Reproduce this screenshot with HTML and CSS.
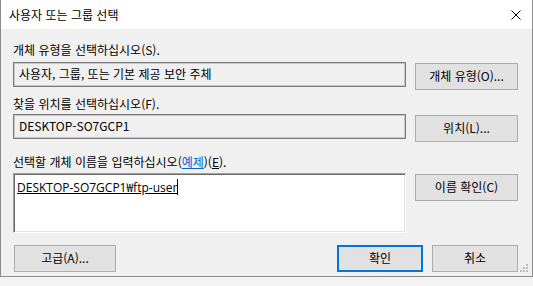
FILE: index.html
```html
<!DOCTYPE html>
<html lang="ko">
<head>
  <meta charset="UTF-8">
  <title>사용자 또는 그룹 선택</title>
  <link rel="stylesheet" href="styles.css">
</head>
<body>
  <div class="window">
    <div class="titlebar">
      <span class="title">사용자 또는 그룹 선택</span>
      <svg class="close" width="10" height="10" viewBox="0 0 10 10">
        <path d="M0.5 0.5 L9.5 9.5 M9.5 0.5 L0.5 9.5" stroke="#000" stroke-width="1" fill="none"/>
      </svg>
    </div>

    <div class="content">
      <div class="label first">개체 유형을 선택하십시오(S).</div>
      <div class="row">
        <div class="field">사용자, 그룹, 또는 기본 제공 보안 주체</div>
        <button class="btn">개체 유형(O)...</button>
      </div>

      <div class="label second">찾을 위치를 선택하십시오(F).</div>
      <div class="row">
        <div class="field">DESKTOP-SO7GCP1</div>
        <button class="btn">위치(L)...</button>
      </div>

      <div class="label third">선택할 개체 이름을 입력하십시오(<span class="link">예제</span>)(<u>E</u>).</div>
      <div class="row">
        <div class="names"><span class="resolved">DESKTOP-SO7GCP1₩ftp-user</span><span class="caret"></span></div>
        <button class="btn">이름 확인(C)</button>
      </div>

      <div class="actions">
        <button class="btn wide">고급(A)...</button>
        <div class="spacer"></div>
        <button class="btn small default">확인</button>
        <button class="btn small">취소</button>
      </div>
    </div>

    <svg class="grip" width="9" height="9" viewBox="0 0 9 9">
      <rect x="6" y="0" width="2" height="2" fill="#bcbcbc"/>
      <rect x="3" y="3" width="2" height="2" fill="#bcbcbc"/>
      <rect x="6" y="3" width="2" height="2" fill="#bcbcbc"/>
      <rect x="0" y="6" width="2" height="2" fill="#bcbcbc"/>
      <rect x="3" y="6" width="2" height="2" fill="#bcbcbc"/>
      <rect x="6" y="6" width="2" height="2" fill="#bcbcbc"/>
    </svg>
  </div>
  <div class="behind"></div>
</body>
</html>
```

FILE: styles.css
```css
html, body {
  margin: 0;
  padding: 0;
}
body {
  width: 533px;
  height: 286px;
  overflow: hidden;
  background: #ffffff;
  font-family: "Noto Sans CJK KR", "Noto Sans", sans-serif;
  font-size: 12px;
  color: #000;
}
.window {
  position: relative;
  width: 533px;
  height: 277px;
  box-sizing: border-box;
  border: 1px solid #8c8c8c;
  border-top: none;
  background: #f0f0f0;
}
.titlebar {
  height: 29px;
  background: #fff;
  display: flex;
  align-items: center;
  justify-content: space-between;
  padding: 0 11px 0 8px;
}
.title {
  font-size: 12px;
  line-height: 16px;
}
.content {
  padding: 13px 14px 0 12px;
}
.label {
  height: 16px;
  line-height: 16px;
  white-space: nowrap;
}
.label.first { margin-bottom: 4px; }
.label.second { margin-top: 6px; margin-bottom: 2px; }
.label.third { margin-top: 12px; margin-bottom: 3px; }
.link {
  color: #0066cc;
  text-decoration: underline;
}
.row {
  display: grid;
  grid-template-columns: 393px 1fr;
  column-gap: 9px;
  align-items: start;
}
.field {
  height: 25px;
  box-sizing: border-box;
  border: 1px solid #7a7a7a;
  box-shadow: inset 0 0 0 1px #c8c8c8;
  padding: 0 5px 2px;
  line-height: 22px;
  white-space: nowrap;
  overflow: hidden;
}
.names {
  height: 60px;
  box-sizing: border-box;
  background: #fff;
  border-style: solid;
  border-width: 1px;
  border-color: #a0a0a0 #ffffff #ffffff #a0a0a0;
  box-shadow: inset 1px 1px 0 #696969, inset -1px -1px 0 #e3e3e3;
  padding: 6px 3px 0;
  line-height: 15px;
  display: flex;
  align-items: flex-start;
}
.resolved {
  text-decoration: underline;
  font-family: "Open Sans", "Noto Sans CJK KR", sans-serif;
  font-size: 12px;
}
.caret {
  width: 1px;
  height: 16px;
  margin-top: -1px;
  background: #000;
}
.btn {
  font-family: inherit;
  font-size: 12px;
  color: #000;
  height: 27px;
  margin: 1px 0 0;
  padding: 0 0 2px;
  box-sizing: border-box;
  background: #e1e1e1;
  border: 1px solid #adadad;
  border-radius: 0;
  line-height: 22px;
}
.actions {
  display: flex;
  margin-top: 12px;
}
.actions .btn { margin-top: 0; }
.btn.wide {
  width: 102px;
  margin-left: 1px;
}
.spacer { flex: 1; }
.btn.small {
  width: 86px;
  margin-left: 9px;
}
.btn.default {
  border: 2px solid #0078d7;
}
.grip {
  position: absolute;
  right: 3px;
  bottom: 3px;
}
.behind {
  height: 9px;
  background: #f3f3f3;
}
```
